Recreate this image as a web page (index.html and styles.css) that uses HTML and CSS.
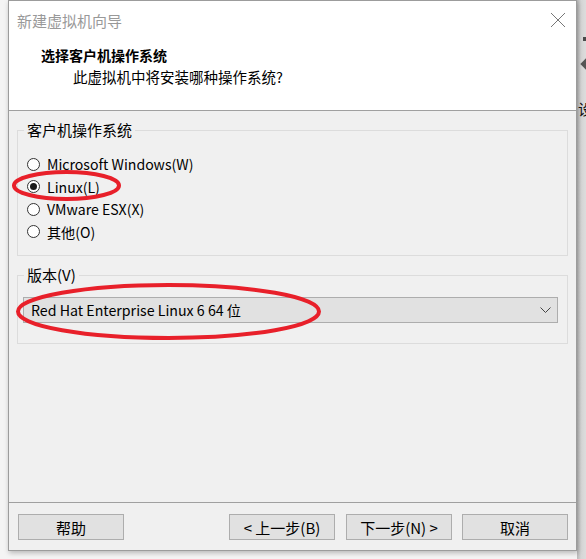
FILE: index.html
```html
<!DOCTYPE html>
<html lang="zh-CN">
<head>
<meta charset="utf-8">
<title>新建虚拟机向导</title>
<link rel="stylesheet" href="styles.css">
</head>
<body>
<div class="screen">
  <div class="gutter"></div>
  <div class="dialog">
    <div class="top">
      <div class="titlebar">
        <span class="title">新建虚拟机向导</span>
        <svg class="close" width="16" height="16" viewBox="0 0 16 16"><path d="M1 1 L15 15 M15 1 L1 15" stroke="#777" stroke-width="1" fill="none"/></svg>
      </div>
      <div class="header">
        <div class="h1">选择客户机操作系统</div>
        <div class="h2">此虚拟机中将安装哪种操作系统?</div>
      </div>
    </div>
    <div class="body">
      <fieldset class="group">
        <legend>客户机操作系统</legend>
        <div class="radios">
          <div class="radio"><span class="circle"></span><span>Microsoft Windows(W)</span></div>
          <div class="radio"><span class="circle on"></span><span>Linux(L)</span></div>
          <div class="radio"><span class="circle"></span><span>VMware ESX(X)</span></div>
          <div class="radio"><span class="circle"></span><span>其他(O)</span></div>
        </div>
      </fieldset>
      <fieldset class="group">
        <legend>版本(V)</legend>
        <div class="ver">
          <div class="select">
            <span>Red Hat Enterprise Linux 6 64 位</span>
            <svg class="chev" width="11" height="6" viewBox="0 0 11 6"><path d="M0.5 0.5 L5.5 5.5 L10.5 0.5" stroke="#444" stroke-width="1" fill="none"/></svg>
          </div>
        </div>
      </fieldset>
    </div>
    <div class="footer">
      <button class="btn">帮助</button>
      <div class="spacer"></div>
      <button class="btn">&lt;&nbsp;上一步(B)</button>
      <button class="btn">下一步(N)&nbsp;&gt;</button>
      <button class="btn cancel">取消</button>
    </div>
  </div>
  <div class="backdrop">
    <span class="bd-icon1"></span>
    <span class="bd-icon2"></span>
    <span class="bd-text">设</span>
  </div>
  <svg class="marks" width="586" height="559" viewBox="0 0 586 559">
    <ellipse cx="66.5" cy="185.5" rx="52.5" ry="13.5" stroke="#e8202a" stroke-width="4" fill="none"/>
    <ellipse cx="168.5" cy="311.5" rx="150.5" ry="26.5" stroke="#e8202a" stroke-width="4" fill="none"/>
  </svg>
</div>
</body>
</html>
```

FILE: styles.css
```css
* { box-sizing: border-box; }
html, body { margin: 0; padding: 0; }
body {
  width: 586px;
  height: 559px;
  overflow: hidden;
  background: #f4f4f4;
  font-family: "Noto Sans CJK SC", "Noto Sans", sans-serif;
  font-size: 15px;
  color: #000;
}
.screen {
  position: relative;
  display: flex;
  width: 586px;
  height: 559px;
}
.gutter { width: 8px; flex: none; }
.dialog {
  width: 569px;
  height: 551px;
  flex: none;
  border: 1px solid #9c9c9c;
  background: #f0f0f0;
  display: flex;
  flex-direction: column;
  box-shadow: 1px 2px 5px rgba(0,0,0,0.25);
  position: relative;
  z-index: 1;
}
.top {
  background: #fff;
  height: 110px;
  border-bottom: 1px solid #a0a0a0;
  flex: none;
}
.titlebar {
  height: 39px;
  display: flex;
  align-items: center;
  justify-content: space-between;
  padding: 0 10px 0 8px;
}
.title { color: #999; font-size: 15px; }
.close { display: block; margin-top: -1px; }
.header { padding-top: 4px; }
.h1 {
  font-weight: bold;
  font-size: 14px;
  padding-left: 32px;
  line-height: 22px;
}
.h2 {
  padding-left: 64px;
  line-height: 22px;
  font-size: 14.5px;
}
.body {
  flex: 1;
  padding: 0 8px;
}
.group {
  margin: 9px 0 0 0;
  padding: 0;
  border: 1px solid #dcdcdc;
  min-width: 0;
}
.group legend {
  margin-left: 6px;
  padding: 0 3px;
  line-height: 20px;
  font-size: 15px;
}
.radios { padding: 13px 0 12px 9px; }
.radio {
  display: flex;
  align-items: center;
  height: 22.5px;
  font-size: 14.1px;
}
.circle {
  width: 13px;
  height: 13px;
  border: 1px solid #333;
  border-radius: 50%;
  background: #fff;
  margin-right: 7px;
  flex: none;
  display: flex;
  align-items: center;
  justify-content: center;
}
.circle.on::after {
  content: "";
  width: 7px;
  height: 7px;
  border-radius: 50%;
  background: #1a1a1a;
}
.ver { padding: 12px 9px 20px 5px; }
.select {
  height: 26px;
  border: 1px solid #adadad;
  background: #e1e1e1;
  display: flex;
  align-items: center;
  justify-content: space-between;
  padding: 0 6px 0 7px;
  font-size: 14.2px;
}
.chev { display: block; }
.footer {
  flex: none;
  height: 48px;
  border-top: 1px solid #a0a0a0;
  display: flex;
  align-items: flex-start;
  padding: 11px 8px 0 9px;
  gap: 11px;
}
.spacer { flex: 1; }
.btn {
  width: 106px;
  height: 26px;
  border: 1px solid #adadad;
  background: #e1e1e1;
  font-family: inherit;
  font-size: 15px;
  padding: 0;
  color: #000;
}
.cancel { margin-left: -1px; }
.backdrop {
  flex: 1;
  position: relative;
  background: linear-gradient(to right, #b9b9b9 0, #d6d6d6 4px, #dcdcdc 100%);
  overflow: hidden;
}
.bd-icon1 {
  position: absolute;
  left: 6px; top: 37px;
  width: 4px; height: 4px;
  background: #4a4a4a;
}
.bd-icon2 {
  position: absolute;
  left: 5px; top: 60px;
  width: 8px; height: 8px;
  background: #555;
  transform: rotate(45deg);
}
.bd-text {
  position: absolute;
  left: 1px; top: 98px;
  font-size: 15px;
  color: #111;
}
.marks {
  position: absolute;
  left: 0; top: 0;
  z-index: 5;
  pointer-events: none;
}
```
